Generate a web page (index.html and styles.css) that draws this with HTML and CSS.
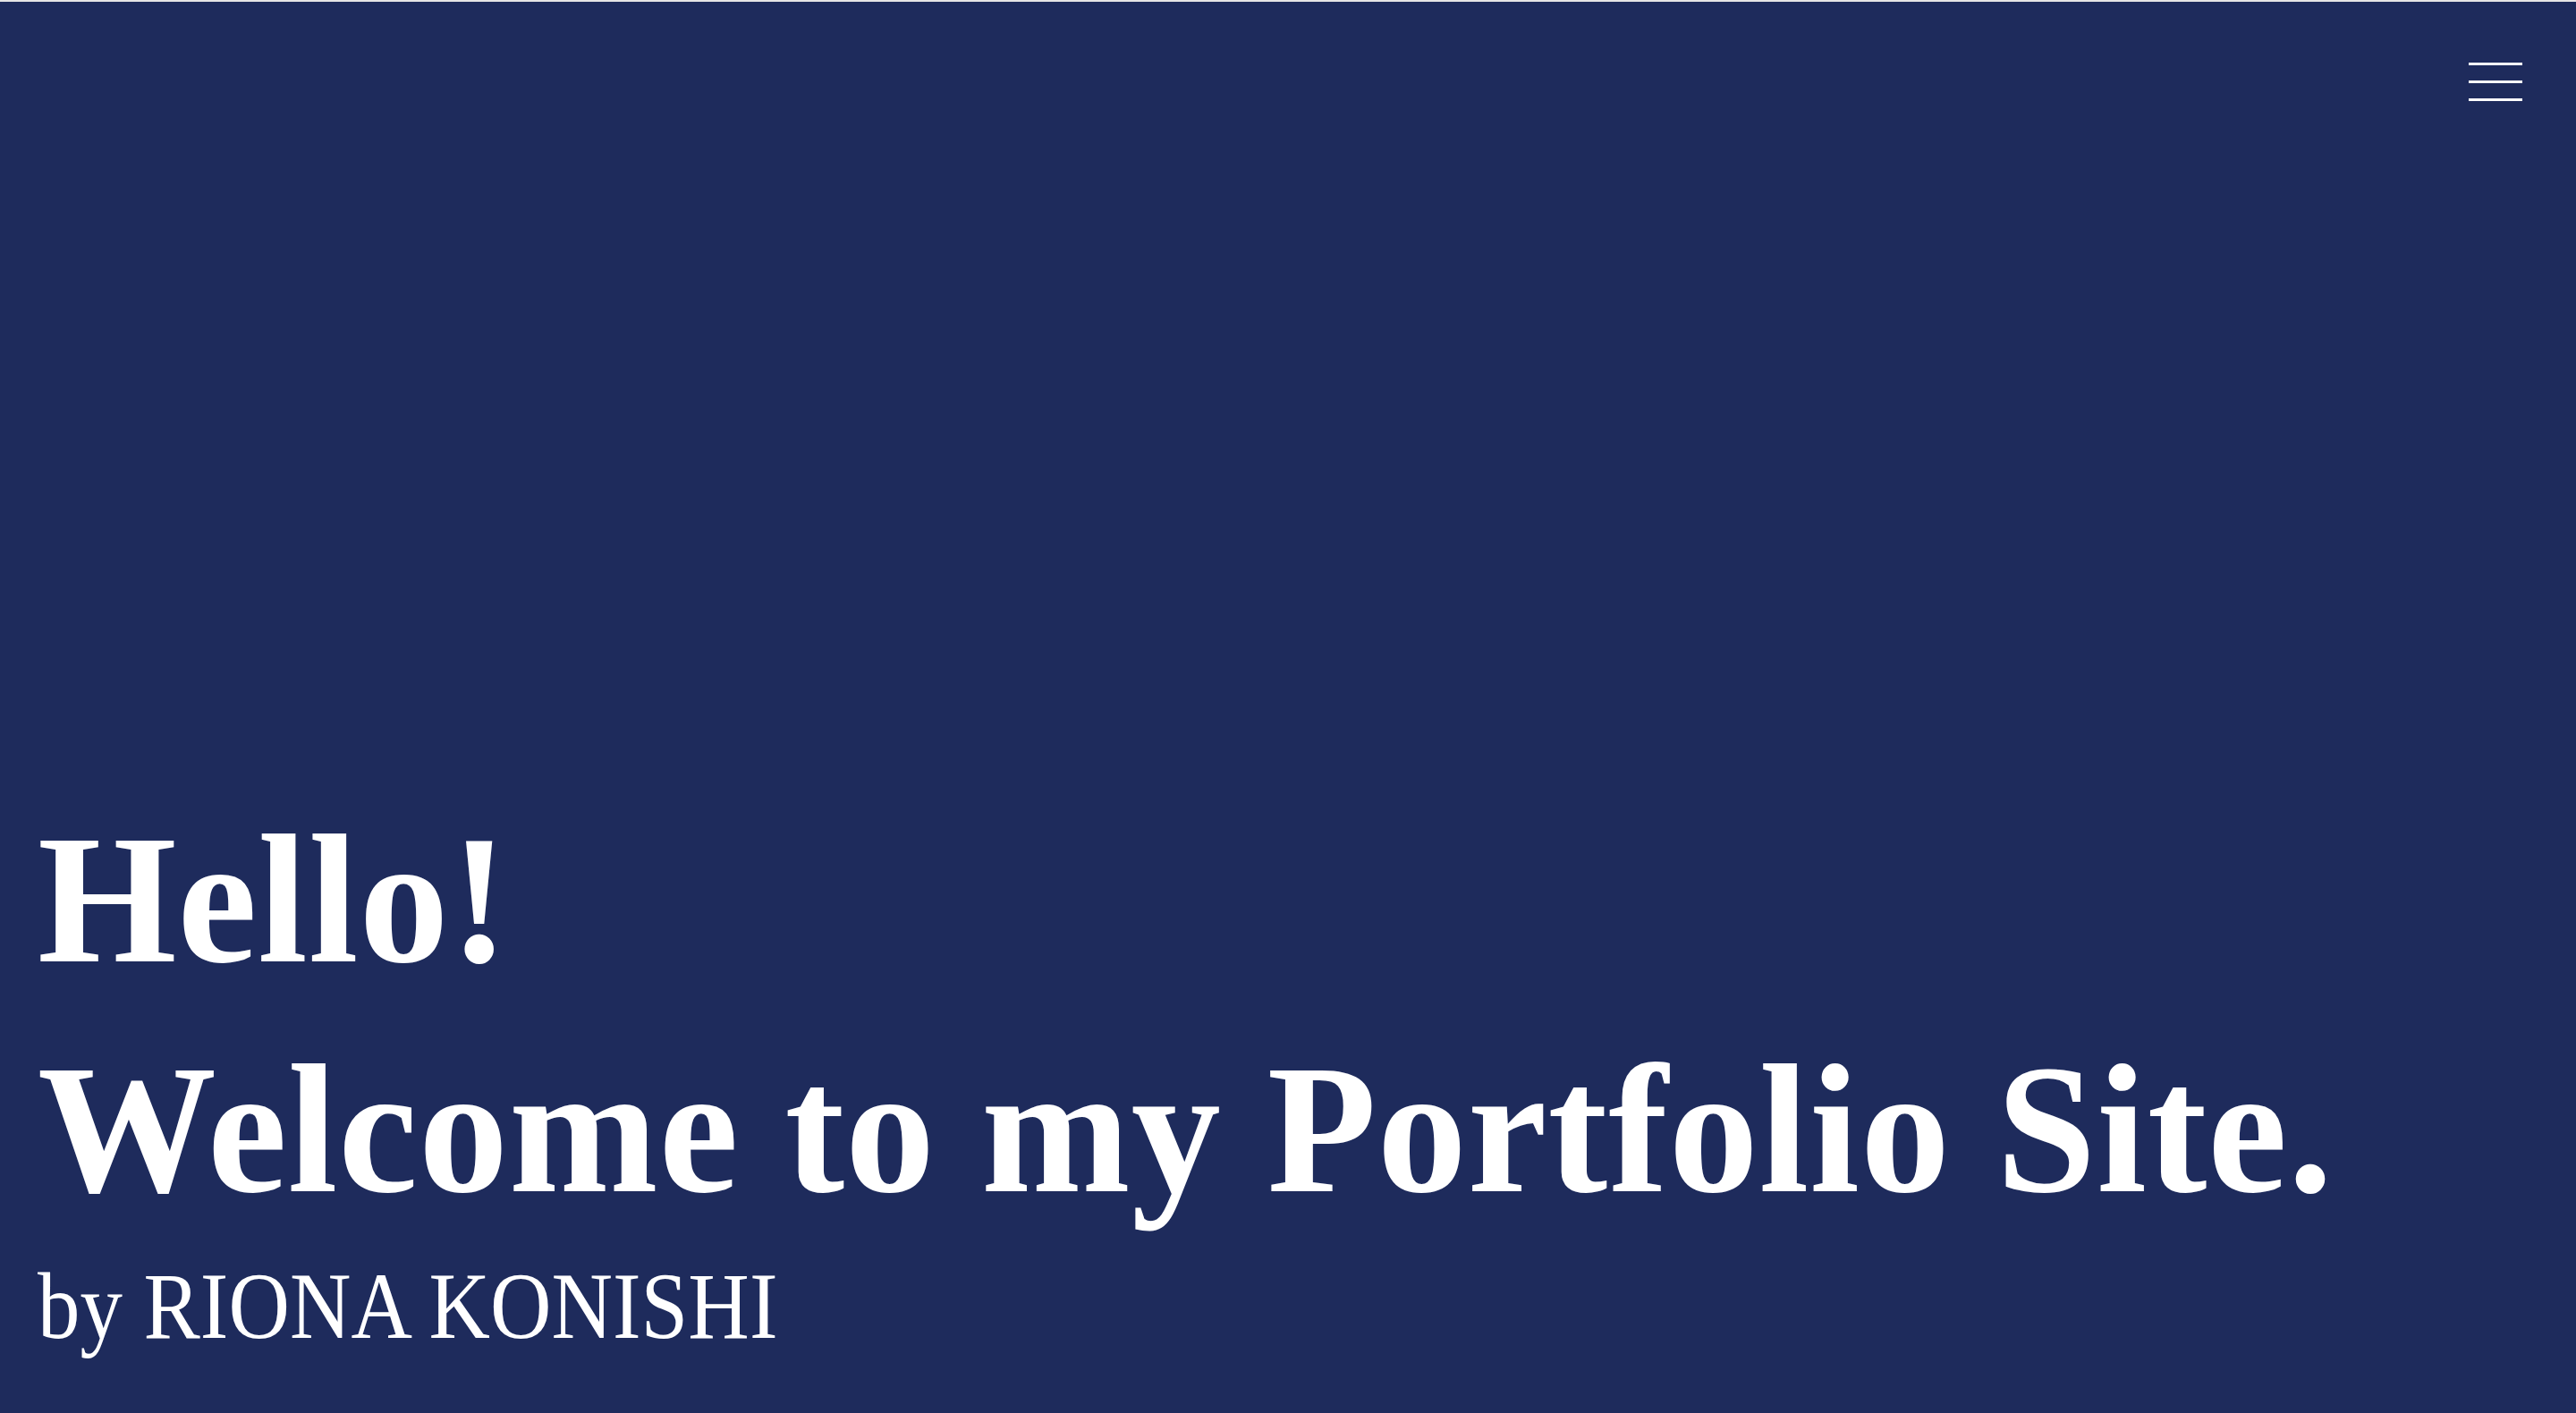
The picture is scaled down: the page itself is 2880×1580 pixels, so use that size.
FILE: index.html
```html
<!DOCTYPE html>
<html lang="en">
<head>
<meta charset="utf-8">
<title>Riona Konishi Portfolio</title>
<link rel="stylesheet" href="styles.css">
</head>
<body>
<div class="topline"></div>
<main class="hero">
  <header class="header">
    <button class="menu" aria-label="menu">
      <span class="menu-bar"></span>
      <span class="menu-bar"></span>
      <span class="menu-bar"></span>
    </button>
  </header>
  <div class="intro">
    <h1 class="title"><span class="title-line">Hello!</span><br><span class="title-line">Welcome to my Portfolio Site.</span></h1>
    <p class="byline"><span class="byline-text">by RIONA KONISHI</span></p>
  </div>
</main>
</body>
</html>
```
FILE: styles.css
```css
html, body {
  margin: 0;
  padding: 0;
  background: #e6e6e6;
}
.topline {
  height: 2px;
  background: #e6e6e6;
}
.hero {
  height: 1578px;
  background: #1e2b5c;
  color: #ffffff;
  display: flex;
  flex-direction: column;
  justify-content: space-between;
  box-sizing: border-box;
  padding: 0 60px 66px 42px;
  font-family: "Liberation Serif", "Times New Roman", serif;
}
.header {
  display: flex;
  justify-content: flex-end;
  padding-top: 68px;
}
.menu {
  display: flex;
  flex-direction: column;
  gap: 17px;
  background: none;
  border: 0;
  padding: 0;
  margin: 0;
  cursor: pointer;
}
.menu-bar {
  display: block;
  width: 60px;
  height: 3px;
  background: #ffffff;
}
.intro {
  display: flex;
  flex-direction: column;
}
.title {
  margin: 0;
  font-size: 200px;
  line-height: 257px;
  font-weight: 700;
  letter-spacing: 1px;
}
.title-line {
  display: inline-block;
  transform: scaleY(1.03);
  transform-origin: left 196px;
}
.byline {
  margin: 15px 0 0 0;
  font-size: 106px;
  line-height: 106px;
  font-weight: 400;
}
.byline-text {
  display: inline-block;
  transform: scaleX(0.895);
  transform-origin: left center;
}
```
